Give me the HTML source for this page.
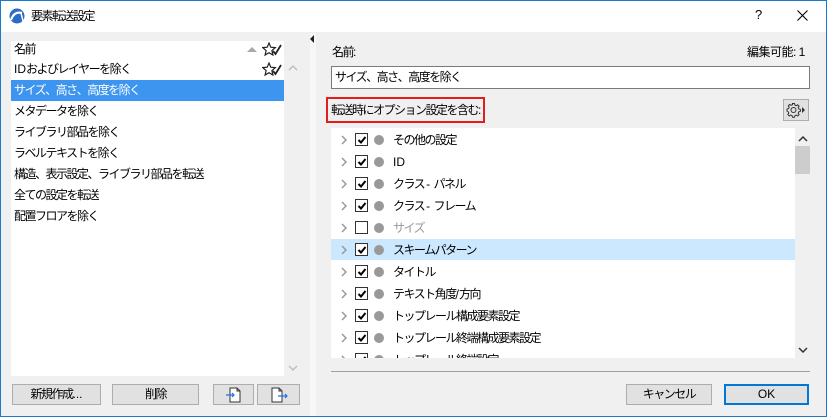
<!DOCTYPE html>
<html><head><meta charset="utf-8"><style>
*{box-sizing:border-box;margin:0;padding:0}
body{width:827px;height:417px;overflow:hidden;background:#f0f0f0;font-family:"Liberation Sans","Noto Sans CJK JP",sans-serif;font-size:12px;color:#000;position:relative}
.a{position:absolute}
.frame{left:0;top:0;width:827px;height:417px;border:1px solid #1979ca}
.title{left:1px;top:1px;width:825px;height:31px;background:#fff}
.t{white-space:nowrap;line-height:16px;letter-spacing:-1.5px}
.l{letter-spacing:0}
.btn{position:absolute;background:#e1e1e1;border:1px solid #adadad;text-align:center;line-height:19px;letter-spacing:-1.5px}
.cb{position:absolute;width:13px;height:13px;border:1px solid #333;background:#fff}
.cb svg{position:absolute;left:1px;top:1px}
.dot{position:absolute;width:10px;height:10px;border-radius:50%;background:#999}
.chev{position:absolute}
</style></head><body>
<div class="a title"></div>
<svg class="a" style="left:9px;top:8px" width="16" height="16" viewBox="0 0 16 16"><circle cx="8" cy="8" r="7.5" fill="#2b6cc4"/><path d="M2 12 Q5 3 13 5" stroke="#fff" stroke-width="2.2" fill="none"/><path d="M12 5 L14 13" stroke="#fff" stroke-width="1.5"/></svg>
<div class="a t" style="left:31px;top:8px">要素転送設定</div>
<div class="a t" style="left:755px;top:7px;font-size:13px">?</div>
<svg class="a" style="left:797px;top:10px" width="11" height="11"><path d="M0.5 0.5L10.5 10.5M10.5 0.5L0.5 10.5" stroke="#000" stroke-width="1.1"/></svg>

<div class="a" style="left:11px;top:41px;width:273px;height:335px;background:#fff"></div>
<div class="a" style="left:11px;top:80px;width:273px;height:21px;background:#3d95f0"></div>
<div class="a t" style="left:14px;top:41px">名前</div>
<div class="a" style="left:247px;top:47px;width:0;height:0;border-left:5px solid transparent;border-right:5px solid transparent;border-bottom:5px solid #aaa"></div>
<svg class="a" style="left:262px;top:42px" width="20" height="16"><path d="M7 1l1.8 4.2 4.5.4-3.4 3 1 4.4L7 10.7 3.1 13l1-4.4-3.4-3 4.5-.4z" fill="none" stroke="#222" stroke-width="1.2"/><path d="M11 9l2.5 3L19 3" stroke="#222" stroke-width="1.8" fill="none"/></svg>
<svg class="a" style="left:262px;top:62px" width="20" height="16"><path d="M7 1l1.8 4.2 4.5.4-3.4 3 1 4.4L7 10.7 3.1 13l1-4.4-3.4-3 4.5-.4z" fill="none" stroke="#222" stroke-width="1.2"/><path d="M11 9l2.5 3L19 3" stroke="#222" stroke-width="1.8" fill="none"/></svg>
<div class="a t" style="left:14px;top:61px"><span class="l">ID</span>およびレイヤーを除く</div>
<div class="a t" style="left:14px;top:82px;color:#fff">サイズ、高さ、高度を除く</div>
<div class="a t" style="left:14px;top:103px">メタデータを除く</div>
<div class="a t" style="left:14px;top:124px">ライブラリ部品を除く</div>
<div class="a t" style="left:14px;top:145px">ラベルテキストを除く</div>
<div class="a t" style="left:14px;top:166px">構造、表示設定、ライブラリ部品を転送</div>
<div class="a t" style="left:14px;top:187px">全ての設定を転送</div>
<div class="a t" style="left:14px;top:208px">配置フロアを除く</div>
<svg class="a" style="left:288px;top:65px" width="10" height="6"><path d="M1 5l4-4 4 4" stroke="#bbb" fill="none" stroke-width="1.3"/></svg>
<svg class="a" style="left:288px;top:365px" width="10" height="6"><path d="M1 1l4 4 4-4" stroke="#bbb" fill="none" stroke-width="1.3"/></svg>
<div class="a" style="left:310px;top:33px;width:6px;height:383px;background:#f7f7f7"></div>
<div class="a" style="left:310px;top:35px;width:0;height:0;border-top:4px solid transparent;border-bottom:4px solid transparent;border-right:4px solid #222"></div>

<div class="btn" style="left:12px;top:384px;width:89px;height:21px">新規作成<span class="l">...</span></div>
<div class="btn" style="left:112px;top:384px;width:87px;height:21px">削除</div>
<div class="btn" style="left:213px;top:384px;width:41px;height:21px"><svg width="20" height="18" viewBox="0 0 20 18" style="margin-top:1px"><path d="M6 2h7l3 3v11H6z M13 2v3h3" fill="#fff" stroke="#333"/><path d="M2 9h8M8 7l2 2-2 2" stroke="#1a73e8" fill="none" stroke-width="1.2"/></svg></div>
<div class="btn" style="left:257px;top:384px;width:43px;height:21px"><svg width="20" height="18" viewBox="0 0 20 18" style="margin-top:1px"><path d="M3 2h7l3 3v11H3z M10 2v3h3" fill="#fff" stroke="#333"/><path d="M9 10h9M16 8l2 2-2 2" stroke="#1a73e8" fill="none" stroke-width="1.2"/></svg></div>

<div class="a t" style="left:332px;top:44px">名前<span class="l">:</span></div>
<div class="a t" style="left:747px;top:44px;letter-spacing:-0.5px">編集可能: 1</div>
<div class="a" style="left:331px;top:66px;width:479px;height:23px;background:#fff;border:1px solid #7a7a7a"></div>
<div class="a t" style="left:335px;top:69px">サイズ、高さ、高度を除く</div>
<div class="a" style="left:326px;top:97px;width:159px;height:26px;border:2px solid #e51c1c"></div>
<div class="a t" style="left:331px;top:102px">転送時にオプション設定を含む<span class="l">:</span></div>
<div class="a" style="left:783px;top:99px;width:26px;height:22px;border:1px solid #adadad;background:#e1e1e1"></div>
<svg class="a" style="left:786px;top:102px" width="20" height="16" viewBox="0 0 20 16"><circle cx="7.5" cy="8" r="2.5" fill="none" stroke="#333"/><path d="M6.5 1.5h2l.4 1.6 1.4.6 1.4-.9 1.4 1.4-.9 1.4.6 1.4 1.6.4v2l-1.6.4-.6 1.4.9 1.4-1.4 1.4-1.4-.9-1.4.6-.4 1.6h-2l-.4-1.6-1.4-.6-1.4.9-1.4-1.4.9-1.4-.6-1.4L1 9V7l1.6-.4.6-1.4-.9-1.4 1.4-1.4 1.4.9 1.4-.6z" fill="none" stroke="#333"/><path d="M16 5l3 3-3 3z" fill="#333"/></svg>

<div class="a" style="left:331px;top:128px;width:464px;height:230px;background:#fff"></div>
<div class="a" style="left:795px;top:128px;width:15px;height:230px;background:#f0f0f0"></div>
<div class="a" style="left:795px;top:146px;width:15px;height:28px;background:#cdcdcd"></div>
<svg class="a" style="left:798px;top:136px" width="10" height="6"><path d="M1 5l4-4 4 4" stroke="#333" fill="none" stroke-width="1.5"/></svg>
<svg class="a" style="left:798px;top:347px" width="10" height="6"><path d="M1 1l4 4 4-4" stroke="#333" fill="none" stroke-width="1.5"/></svg>
<div class="a" style="left:331px;top:371px;width:479px;height:1px;background:#a0a0a0"></div>
<div class="btn" style="left:626px;top:384px;width:86px;height:21px">キャンセル</div>
<div class="btn" style="left:724px;top:384px;width:85px;height:21px;border:2px solid #0078d7;line-height:17px;letter-spacing:0">OK</div>

<div class="a" style="left:331px;top:128px;width:464px;height:230px;overflow:hidden">
<div class="a" style="left:0;top:111px;width:464px;height:21px;background:#cce8ff"></div>
<div id="rows"></div>
</div>
<script>
var items=["その他の設定","<span class='l'>ID</span>","クラス <span class='l'>- </span>パネル","クラス <span class='l'>- </span>フレーム","サイズ","スキームパターン","タイトル","テキスト角度<span class='l'>/</span>方向","トップレール構成要素設定","トップレール終端構成要素設定","トップレール終端設定"];
var h="";
items.forEach(function(s,i){var y=i*22+4;var chk=i!=4;
h+='<svg class="chev" style="left:10px;top:'+(y+3)+'px" width="6" height="10"><path d="M1 1l4 4-4 4" stroke="#999" stroke-width="1.5" fill="none"/></svg>';
h+='<div class="cb" style="left:24px;top:'+(y+1)+'px">'+(chk?'<svg width="10" height="10"><path d="M1.5 5l2.5 2.5L8.5 2" stroke="#000" stroke-width="2" fill="none"/></svg>':'')+'</div>';
h+='<div class="dot" style="left:43px;top:'+(y+3)+'px"></div>';
h+='<div class="a t" style="left:62px;top:'+(y)+'px;'+(chk?'':'color:#999')+'">'+s+'</div>';});
document.getElementById('rows').innerHTML=h;
</script>
<div class="a frame"></div>
</body></html>
